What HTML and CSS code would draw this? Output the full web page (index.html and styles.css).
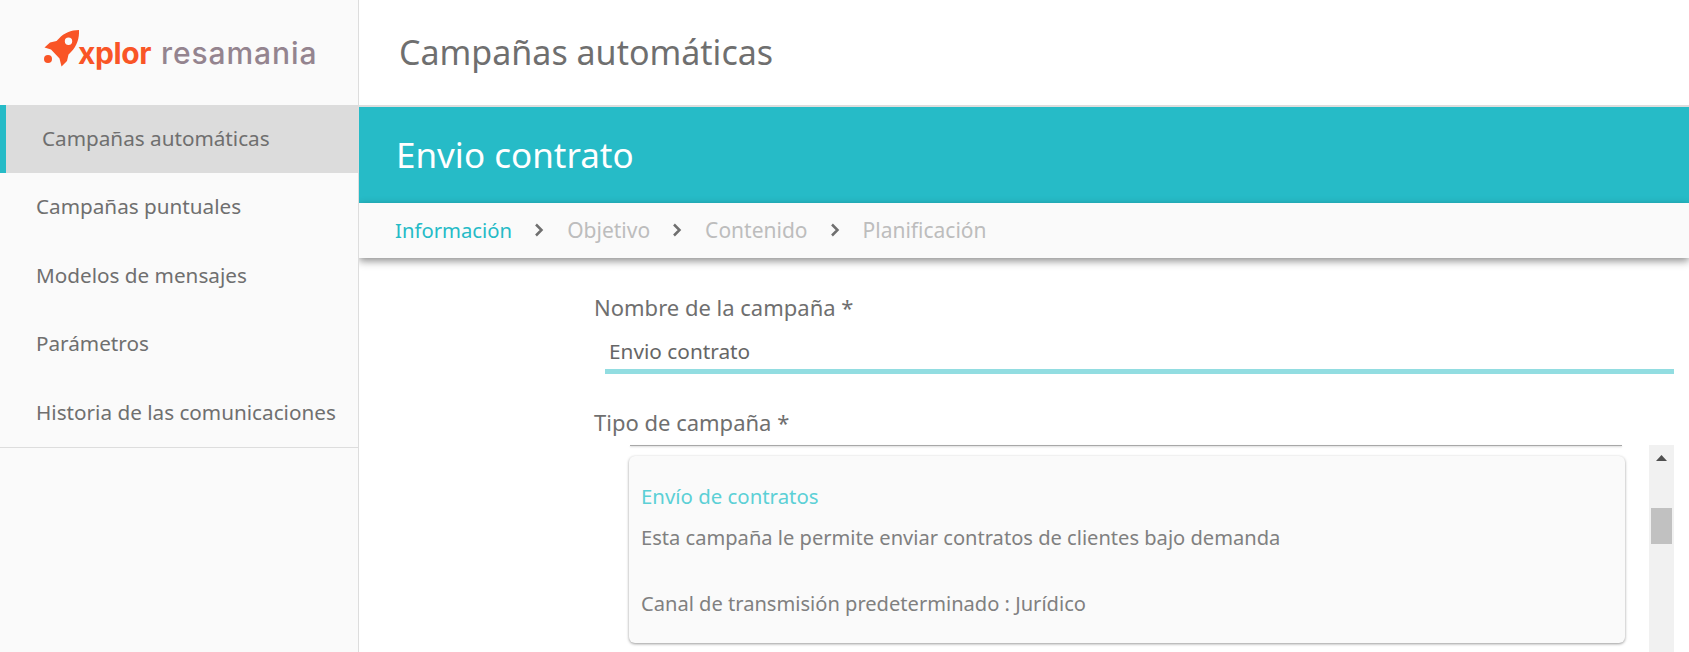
FILE: index.html
```html
<!DOCTYPE html>
<html>

<head>
    <title>Campañas automáticas</title>
    <link rel="stylesheet" href="styles.css">
</head>

<body>

    <!-- Sidebar -->
    <aside class="sidebar">
        <div class="logo">
            <svg class="logo-rocket" width="36" height="38" viewBox="0 0 36 38">
                <path fill-rule="evenodd" fill="#f95526" d="M35 1 C35.500 9 33 17 27 23 L24.500 25.500 L23 32 L17.500 37.500 L15.500 29.500 L7 20.500 L0.500 18.500 L6 13.500 L12.500 12 L15 9.500 C20 4 27 1 35 1 Z M24.500 8.500 A3.700 3.700 0 1 0 24.510 15.900 A3.700 3.700 0 1 0 24.500 8.500 Z" />
                <circle cx="4" cy="30" r="4" fill="#f95526" />
            </svg>
            <span class="logo-xplor">xplor</span>
            <span class="logo-resamania">resamania</span>
        </div>
        <nav class="menu">
            <a class="menu-item active">Campañas automáticas</a>
            <a class="menu-item">Campañas puntuales</a>
            <a class="menu-item">Modelos de mensajes</a>
            <a class="menu-item">Parámetros</a>
            <a class="menu-item">Historia de las comunicaciones</a>
        </nav>
    </aside>

    <main class="main">
        <header class="topbar">
            <h1>Campañas automáticas</h1>
        </header>

        <div class="banner">Envio contrato</div>

        <!-- Steps -->
        <div class="steps">
            <span class="step current">Información</span>
            <svg class="chevron" width="10" height="14" viewBox="0 0 10 14"><path d="M2 1.500 L7.500 7 L2 12.500" /></svg>
            <span class="step">Objetivo</span>
            <svg class="chevron" width="10" height="14" viewBox="0 0 10 14"><path d="M2 1.500 L7.500 7 L2 12.500" /></svg>
            <span class="step">Contenido</span>
            <svg class="chevron" width="10" height="14" viewBox="0 0 10 14"><path d="M2 1.500 L7.500 7 L2 12.500" /></svg>
            <span class="step">Planificación</span>
        </div>

        <!-- Form -->
        <section class="form">
            <label class="field-label">Nombre de la campaña *</label>
            <div class="text-input">Envio contrato</div>

            <label class="field-label type-label">Tipo de campaña *</label>
            <div class="type-list">
                <div class="cards">
                    <div class="prev-card"></div>
                    <div class="card">
                        <div class="card-title">Envío de contratos</div>
                        <p>Esta campaña le permite enviar contratos de clientes bajo demanda</p>
                        <p class="channel">Canal de transmisión predeterminado : Jurídico</p>
                    </div>
                </div>
                <div class="scrollbar">
                    <svg class="scroll-arrow" width="11" height="7" viewBox="0 0 11 7"><path d="M5.500 0 L11 6 L0 6 Z" /></svg>
                    <div class="scroll-thumb"></div>
                </div>
            </div>
        </section>
    </main>

</body>

</html>
```

FILE: styles.css
```css
body {
    margin: 0;
    height: 652px;
    display: flex;
    overflow: hidden;
    background-color: #fff;
    color: #6f6f6f;
    font-family: 'Noto Sans', sans-serif;
}

/* Sidebar */
.sidebar {
    width: 358px;
    flex-shrink: 0;
    background-color: #fafafa;
    border-right: 1px solid #ddd;
}

.logo {
    height: 105px;
    display: flex;
    align-items: center;
    padding-left: 44px;
    box-sizing: border-box;
}

.logo-rocket {
    margin-right: -2px;
    margin-top: -10px;
}

.logo-xplor,
.logo-resamania {
    font-family: 'Inter', sans-serif;
    font-size: 30px;
    line-height: 1;
}

.logo-xplor {
    color: #f95526;
    font-weight: 700;
    letter-spacing: -0.4px;
    margin-right: 10px;
}

.logo-resamania {
    color: #94848f;
    font-weight: 500;
    letter-spacing: 0.9px;
}

.menu {
    border-bottom: 1px solid #ddd;
}

.menu-item {
    display: flex;
    align-items: center;
    height: 68.500px;
    box-sizing: border-box;
    padding-left: 36px;
    padding-bottom: 2px;
    font-size: 20.700px;
    color: #6f6f6f;
}

.menu-item.active {
    height: 68px;
    background-color: #dcdcdc;
    border-left: 6px solid #26bbc7;
}

/* Main column */
.main {
    flex: 1;
    min-width: 0;
    overflow: hidden;
}

.topbar {
    height: 107px;
    box-sizing: border-box;
    border-bottom: 2px solid #ddd;
    display: flex;
    align-items: center;
    padding-left: 40px;
    padding-bottom: 2px;
}

.topbar h1 {
    margin: 0;
    font-size: 34px;
    font-weight: 400;
    color: #6f6f6f;
}

.banner {
    height: 96px;
    box-sizing: border-box;
    display: flex;
    align-items: center;
    padding-left: 37px;
    padding-bottom: 2px;
    background-color: #26bbc7;
    color: #fff;
    font-size: 35px;
}

.steps {
    height: 55px;
    box-sizing: border-box;
    display: flex;
    align-items: center;
    padding-left: 36px;
    padding-bottom: 2px;
    background-color: #fafafa;
    box-shadow: 0 3px 8px rgba(0, 0, 0, 0.45);
    position: relative;
    font-size: 21px;
    color: #bdbdbd;
}

.step.current {
    color: #26bbc7;
    font-size: 20.300px;
}

.chevron {
    margin: 0 23px 0 22px;
}

.chevron path {
    fill: none;
    stroke: #6f6f6f;
    stroke-width: 2.500;
}

/* Form */
.form {
    padding: 33px 15px 0 235px;
}

.field-label {
    display: block;
    font-size: 22px;
    line-height: 32px;
    color: #6f6f6f;
}

.text-input {
    margin-left: 11px;
    padding: 15px 4px 0;
    height: 31px;
    border-bottom: 5px solid #92dde1;
    font-size: 20.800px;
    line-height: 27px;
    color: #666;
}

.type-label {
    margin-top: 32px;
}

.type-list {
    display: flex;
    height: 207px;
    margin-top: 7px;
}

.cards {
    flex: 1;
    padding-left: 35px;
    padding-right: 24px;
}

.prev-card {
    height: 1px;
    margin-right: 3px;
    margin-left: 1px;
    background-color: #a8a8a8;
    box-shadow: 0 1px 2px rgba(0, 0, 0, 0.2);
}

.card {
    margin-top: 10px;
    height: 187px;
    box-sizing: border-box;
    padding: 26px 12px 0;
    background-color: #fafafa;
    border-radius: 6px;
    box-shadow: 0 1px 3px rgba(0, 0, 0, 0.4);
    font-size: 20.100px;
    color: #808080;
}

.card-title {
    color: #5cd0d6;
    font-size: 20.400px;
    line-height: 28px;
}

.card p {
    margin: 15px 0 0;
    line-height: 26px;
}

.card p.channel {
    margin-top: 40px;
}

.scrollbar {
    width: 25px;
    flex-shrink: 0;
    background-color: #f1f1f1;
    display: flex;
    flex-direction: column;
    align-items: center;
}

.scroll-arrow {
    margin-top: 10px;
    fill: #505050;
}

.scroll-thumb {
    width: 21px;
    height: 36px;
    margin-top: 46px;
    background-color: #c1c1c1;
}
```
